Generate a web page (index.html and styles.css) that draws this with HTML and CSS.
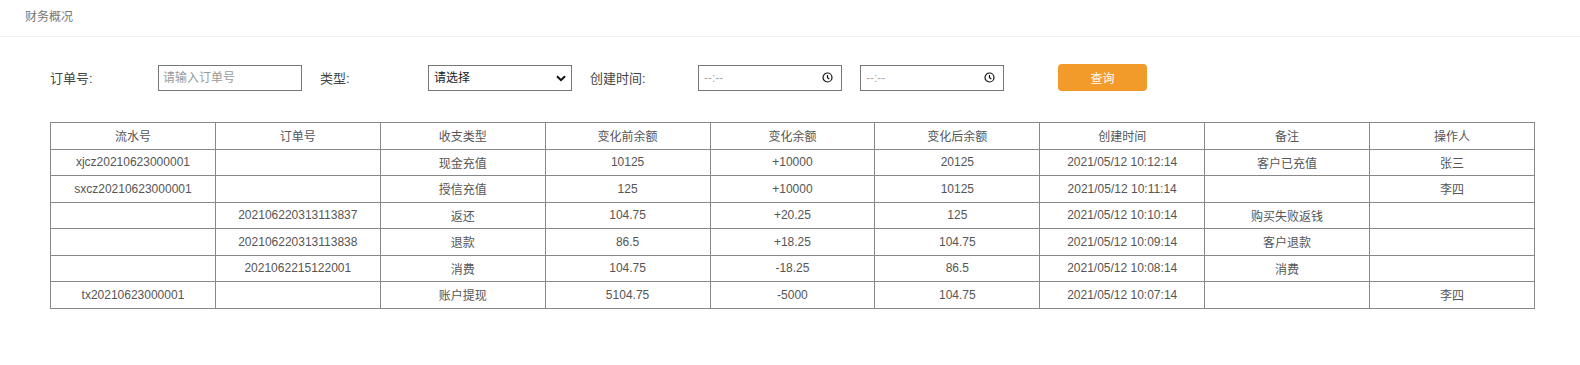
FILE: index.html
```html
<!DOCTYPE html>
<html lang="zh-CN">
<head>
<meta charset="utf-8">
<title>财务概况</title>
<link rel="stylesheet" href="styles.css">
</head>
<body>
<div class="page-title">财务概况</div>
<form class="toolbar">
  <label class="field-label">订单号:</label>
  <input class="text-input" type="text" placeholder="请输入订单号">
  <label class="field-label gap">类型:</label>
  <div class="select-wrap">
    <select class="select-input">
      <option>请选择</option>
    </select>
    <svg class="chevron" width="10" height="7" viewBox="0 0 10 7"><path d="M1 1.2 L5 5.2 L9 1.2" fill="none" stroke="#111" stroke-width="2"/></svg>
  </div>
  <label class="field-label gap">创建时间:</label>
  <div class="time-input"><span class="time-ph">--:--</span><svg width="11" height="11" viewBox="0 0 12 12"><circle cx="6" cy="6" r="4.9" fill="none" stroke="#111" stroke-width="1.3"/><path d="M6 3.2 V6.2 L8 7.6" fill="none" stroke="#111" stroke-width="1.3"/></svg></div>
  <div class="time-input gap"><span class="time-ph">--:--</span><svg width="11" height="11" viewBox="0 0 12 12"><circle cx="6" cy="6" r="4.9" fill="none" stroke="#111" stroke-width="1.3"/><path d="M6 3.2 V6.2 L8 7.6" fill="none" stroke="#111" stroke-width="1.3"/></svg></div>
  <button class="query-btn" type="button">查询</button>
</form>
<table class="ledger">
  <thead>
    <tr><th>流水号</th><th>订单号</th><th>收支类型</th><th>变化前余额</th><th>变化余额</th><th>变化后余额</th><th>创建时间</th><th>备注</th><th>操作人</th></tr>
  </thead>
  <tbody>
    <tr><td>xjcz20210623000001</td><td></td><td>现金充值</td><td>10125</td><td>+10000</td><td>20125</td><td>2021/05/12 10:12:14</td><td>客户已充值</td><td>张三</td></tr>
    <tr><td>sxcz20210623000001</td><td></td><td>授信充值</td><td>125</td><td>+10000</td><td>10125</td><td>2021/05/12 10:11:14</td><td></td><td>李四</td></tr>
    <tr><td></td><td>202106220313113837</td><td>返还</td><td>104.75</td><td>+20.25</td><td>125</td><td>2021/05/12 10:10:14</td><td>购买失败返钱</td><td></td></tr>
    <tr><td></td><td>202106220313113838</td><td>退款</td><td>86.5</td><td>+18.25</td><td>104.75</td><td>2021/05/12 10:09:14</td><td>客户退款</td><td></td></tr>
    <tr><td></td><td>2021062215122001</td><td>消费</td><td>104.75</td><td>-18.25</td><td>86.5</td><td>2021/05/12 10:08:14</td><td>消费</td><td></td></tr>
    <tr><td>tx20210623000001</td><td></td><td>账户提现</td><td>5104.75</td><td>-5000</td><td>104.75</td><td>2021/05/12 10:07:14</td><td></td><td>李四</td></tr>
  </tbody>
</table>
</body>
</html>
```

FILE: styles.css
```css
* { box-sizing: border-box; }
body {
  margin: 0;
  background: #fff;
  font-family: "Liberation Sans", "Noto Sans CJK SC", sans-serif;
  font-size: 12px;
  color: #555;
}
.page-title {
  height: 37px;
  line-height: 34px;
  padding-left: 25px;
  color: #777;
  font-size: 12px;
  border-bottom: 1px solid #f1f1f1;
}
.toolbar {
  display: flex;
  align-items: center;
  padding: 27px 0 0 50px;
  margin: 0;
}
.field-label {
  width: 108px;
  font-size: 13px;
  color: #444;
}
.gap { margin-left: 18px; }
.text-input {
  width: 144px;
  height: 26px;
  border: 1px solid #777;
  border-radius: 0;
  padding: 0 4px;
  font-family: inherit;
  font-size: 12px;
  color: #333;
  outline: none;
}
.text-input::placeholder { color: #999; }
.select-wrap {
  position: relative;
  width: 144px;
  height: 26px;
}
.select-input {
  appearance: none;
  -webkit-appearance: none;
  width: 100%;
  height: 100%;
  border: 1px solid #777;
  border-radius: 0;
  background: #fff;
  padding: 0 5px;
  font-family: inherit;
  font-size: 12px;
  color: #222;
}
.chevron {
  position: absolute;
  right: 6px;
  top: 10px;
}
.time-input {
  width: 144px;
  height: 26px;
  border: 1px solid #777;
  display: flex;
  align-items: center;
  justify-content: space-between;
  padding: 0 8px 0 5px;
}
.time-ph {
  color: #aaa;
  font-size: 12px;
}
.query-btn {
  margin-left: 54px;
  width: 89px;
  height: 27px;
  border: none;
  border-radius: 4px;
  background: #f39b2a;
  color: #fff;
  font-family: inherit;
  font-size: 12px;
}
.ledger {
  margin: 31px 0 0 50px;
  width: 1485px;
  table-layout: fixed;
  border-collapse: collapse;
}
.ledger th,
.ledger td {
  border: 1px solid #888;
  height: 26.5px;
  padding: 0;
  text-align: center;
  font-weight: normal;
  color: #555;
  font-size: 12px;
}
```
